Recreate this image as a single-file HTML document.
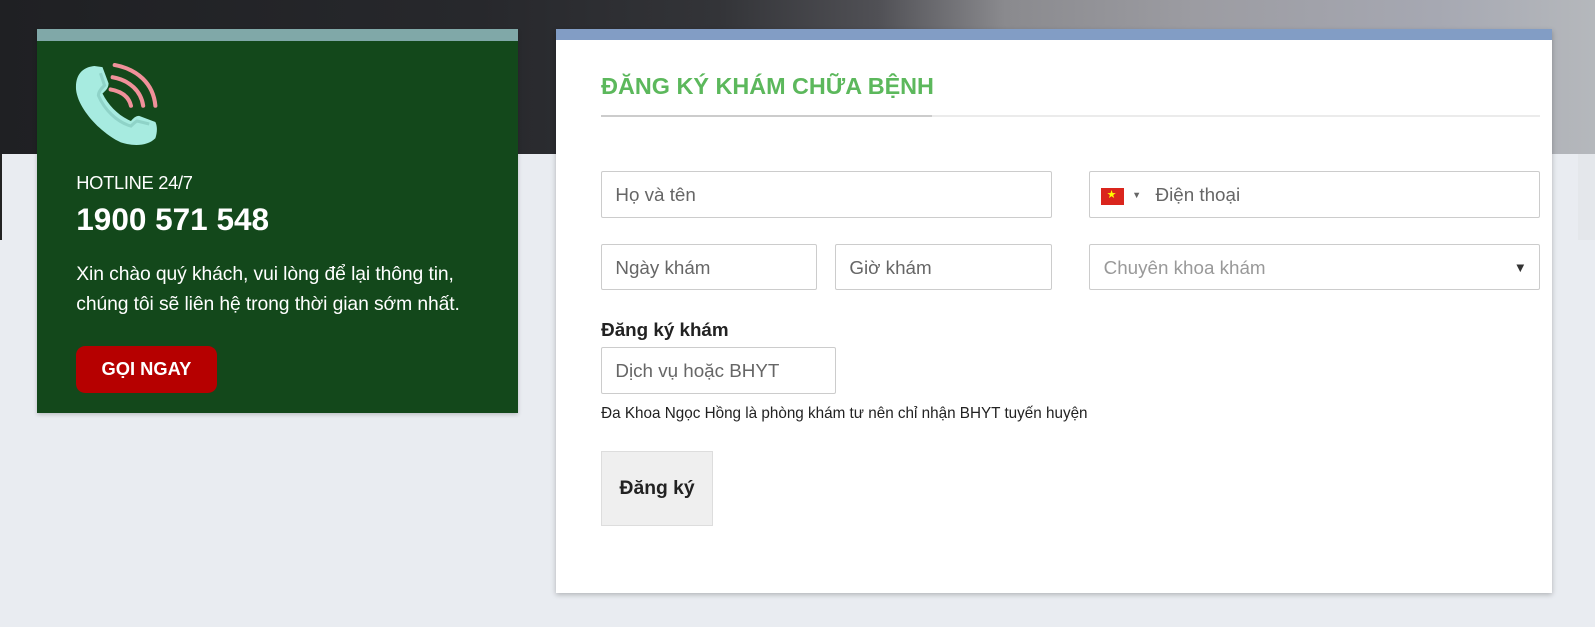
<!DOCTYPE html>
<html><head><meta charset="utf-8"><style>
*{box-sizing:border-box;margin:0;padding:0}
body{width:1595px;height:626px;overflow:hidden;background:#e9ecf1;font-family:"Liberation Sans",sans-serif;position:relative}
.banner{position:absolute;left:0;top:0;width:1595px;height:154px;background:linear-gradient(90deg,#1f2023 0%,#27282c 30%,#333438 45%,#505055 55%,#8a8a8e 63%,#9c9ca2 75%,#a6a8b2 90%,#b5b8bc 100%)}
.lstrip{position:absolute;left:0;top:154px;width:2px;height:86px;background:#222}
.rstrip{position:absolute;left:1578px;top:154px;width:17px;height:86px;background:#e4e7eb}
.wrap{position:absolute;left:0;top:0;width:1568px;height:616px;zoom:1.0172}
.left{position:absolute;left:36px;top:28.5px;width:473px;height:378px;background:#13481b;box-shadow:0 2px 4px rgba(0,0,0,.2)}
.left .bar{height:12px;background:#80a8a8}
.left .t1{position:absolute;left:39px;top:141px;color:#fff;font-size:18px;letter-spacing:-.3px}
.left .t2{position:absolute;left:39px;top:169px;color:#fff;font-size:31px;font-weight:bold}
.left .t3{position:absolute;left:39px;top:227px;color:#fff;font-size:19px;line-height:30px;letter-spacing:-.1px}
.btn{position:absolute;left:39px;top:312px;width:138px;height:46px;background:#b60000;border-radius:9px;color:#fff;font-weight:bold;font-size:18px;text-align:center;line-height:46px}
.right{position:absolute;left:547px;top:28.5px;width:979px;height:554px;background:#fff;box-shadow:0 2px 5px rgba(0,0,0,.25)}
.right .bar{height:11px;background:#829dc5}
h2{position:absolute;left:44px;top:43px;color:#5cb85c;font-size:23px;font-weight:bold}
.line{position:absolute;left:44px;top:85px;width:923px;height:2px;background:#ebebeb}
.line2{position:absolute;left:44px;top:85px;width:325px;height:2px;background:#ccc}
.in{position:absolute;border:1px solid #ccc;border-radius:2px;height:46px;font-size:18.5px;color:#666;line-height:46px;padding-left:13px}
.lab{position:absolute;left:44px;top:285px;font-size:18.5px;font-weight:bold;color:#222}
.note{position:absolute;left:44px;top:370px;font-size:15px;color:#222}
.sub{position:absolute;left:44px;top:415px;width:110px;height:74px;background:#efefef;border:1px solid #ddd;font-weight:bold;font-size:19px;color:#222;text-align:center;line-height:72px}
</style></head><body>
<div class="banner"></div><div class="lstrip"></div><div class="rstrip"></div>
<div class="wrap">
<div class="left"><div class="bar"></div>
<svg style="position:absolute;left:37px;top:33px" width="84" height="84" viewBox="0 0 84 84">
<path d="M20 3 C10 4 1 10 2 26 C4 46 28 70 46 78 C58 82 72 82 80 74 C82 68 82 62 80 58 L64 52 C60 52 58 55 56 57 C44 52 34 42 28 30 C31 27 34 25 34 20 L28 4 Z" fill="#a7ebe0"/>
<path d="M26 10 L30 22 C27 25 24 28 24 32 C30 46 42 58 56 62 C58 60 60 58 62 57 L74 60" stroke="#8fd3c8" stroke-width="3" fill="none"/>
<g stroke="#f0919a" stroke-width="4" fill="none" stroke-linecap="round"><path d="M40 2 C62 6 78 20 80 42"/><path d="M38 14 C55 17 66 28 68 42"/><path d="M36 26 C48 28 54 34 56 42"/></g>
</svg>
<div class="t1">HOTLINE 24/7</div><div class="t2">1900 571 548</div>
<div class="t3">Xin chào quý khách, vui lòng để lại thông tin,<br>chúng tôi sẽ liên hệ trong thời gian sớm nhất.</div>
<div class="btn">GỌI NGAY</div></div>
<div class="right"><div class="bar"></div>
<h2>ĐĂNG KÝ KHÁM CHỮA BỆNH</h2><div class="line"></div><div class="line2"></div>
<div class="in" style="left:44px;top:140px;width:443px">Họ và tên</div>
<div class="in" style="left:524px;top:140px;width:443px;padding-left:64px"><span style="position:absolute;left:10px;top:15px;width:23px;height:17px;background:#da251d"><span style="position:absolute;left:6px;top:-15px;color:#ff0;font-size:11px">★</span></span><span style="position:absolute;left:41px;top:0;font-size:9px">▼</span>Điện thoại</div>
<div class="in" style="left:44px;top:211px;width:212px">Ngày khám</div>
<div class="in" style="left:274px;top:211px;width:213px">Giờ khám</div>
<div class="in" style="left:524px;top:211px;width:443px;color:#999">Chuyên khoa khám<span style="position:absolute;right:12px;top:0;color:#333;font-size:13px">▼</span></div>
<div class="lab">Đăng ký khám</div>
<div class="in" style="left:44px;top:313px;width:231px">Dịch vụ hoặc BHYT</div>
<div class="note">Đa Khoa Ngọc Hồng là phòng khám tư nên chỉ nhận BHYT tuyến huyện</div>
<div class="sub">Đăng ký</div>
</div>
</div>
</body></html>
